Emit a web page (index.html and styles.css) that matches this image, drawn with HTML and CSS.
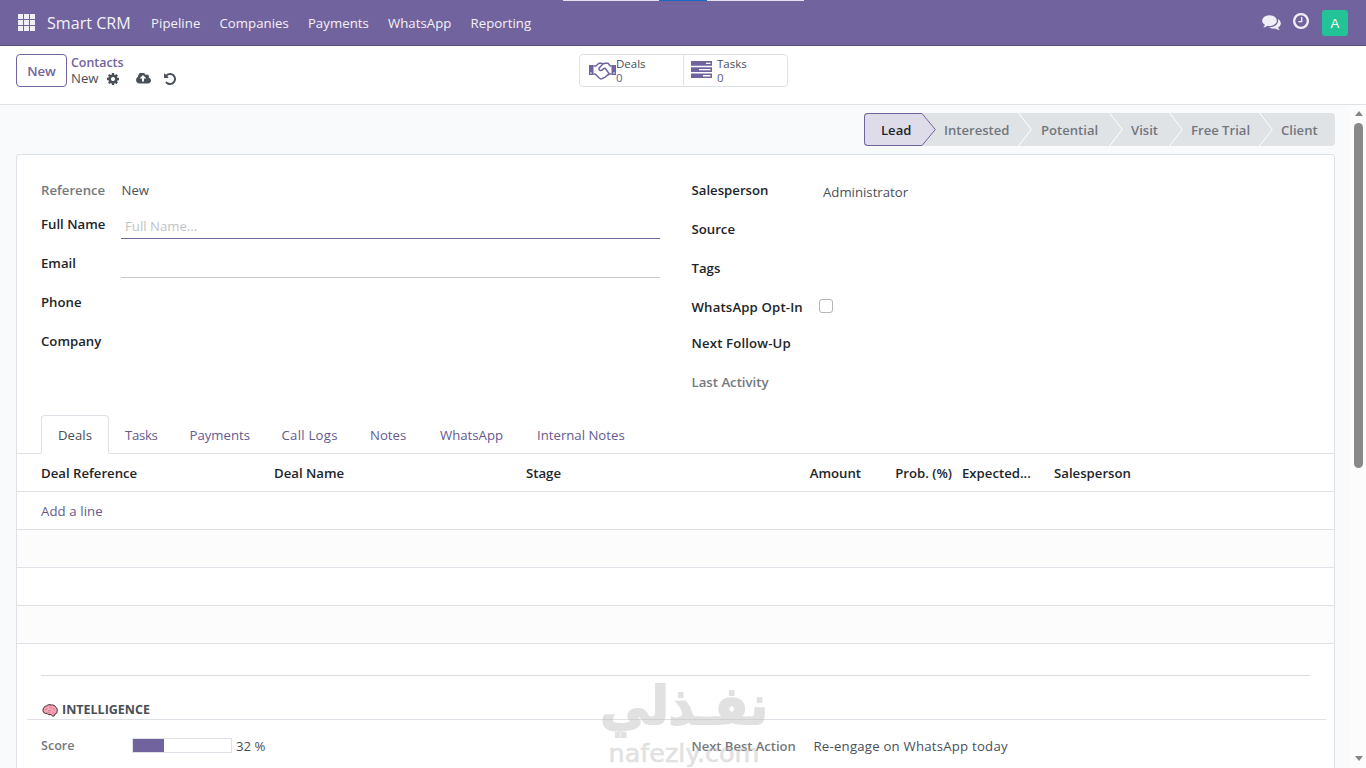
FILE: index.html
```html
<!DOCTYPE html>
<html lang="en">
<head>
    <meta charset="UTF-8">
    <meta name="viewport" content="width=device-width, initial-scale=1.0">
    <title>Smart CRM - Contacts</title>
    <link rel="stylesheet" href="styles.css">
</head>
<body>
    <header class="navbar">
        <div class="top-strip"><span></span></div>
        <svg class="apps-icon" viewBox="0 0 17 17"><path d="M0 0h5v5H0zM6 0h5v5H6zM12 0h5v5h-5zM0 6h5v5H0zM6 6h5v5H6zM12 6h5v5h-5zM0 12h5v5H0zM6 12h5v5H6zM12 12h5v5h-5z"/></svg>
        <span class="brand">Smart CRM</span>
        <nav class="menu">
            <a>Pipeline</a>
            <a>Companies</a>
            <a>Payments</a>
            <a>WhatsApp</a>
            <a>Reporting</a>
        </nav>
        <div class="systray">
            <svg class="chat-icon" viewBox="0 128 1792 1536"><path d="M1408 768q0 139-94 257t-256.500 186.500-353.500 68.500q-86 0-176-16-124 88-278 128-36 9-86 16h-3q-11 0-20.500-8t-11.500-21q-1-3-1-6.500t.5-6.500 2-6l2.500-5 3.500-5.500 4-5 4.500-5 4-4.500q5-6 23-25t26-29.500 22.500-29 25-38.500 20.500-44q-124-72-195-177t-71-224q0-139 94-257t256.500-186.500 353.500-68.500 353.500 68.500 256.500 186.500 94 257zm384 256q0 120-71 224.500t-195 176.500q10 24 20.500 44t25 38.500 22.500 29 26 29.500 23 25q1 1 4 4.500t4.500 5 4 5 3.500 5.500l2.500 5 2 6 .5 6.500-1 6.500q-3 14-13 22t-22 7q-50-7-86-16-154-40-278-128-90 16-176 16-271 0-472-132 58 4 88 4 161 0 309-45t264-129q125-92 192-212t67-254q0-77-23-152 129 71 204 178t75 230z"/></svg>
            <svg class="clock-icon" viewBox="128 128 1536 1536"><path d="M1024 544v448q0 14-9 23t-23 9h-320q-14 0-23-9t-9-23v-64q0-14 9-23t23-9h224v-352q0-14 9-23t23-9h64q14 0 23 9t9 23zm416 352q0-148-73-273t-198-198-273-73-273 73-198 198-73 273 73 273 198 198 273 73 273-73 198-198 73-273zm224 0q0 209-103 385.500t-279.500 279.500-385.500 103-385.500-103-279.500-279.500-103-385.500 103-385.500 279.500-279.500 385.500-103 385.500 103 279.500 279.500 103 385.500z"/></svg>
            <span class="avatar">A</span>
        </div>
    </header>

    <section class="control-panel">
        <div class="cp-left">
            <button class="btn-new" type="button">New</button>
            <div class="breadcrumb">
                <a>Contacts</a>
                <div class="crumb-current">
                    <span>New</span>
                    <svg class="cog-icon" viewBox="128 128 1536 1536"><path d="M1152 896q0-106-75-181t-181-75-181 75-75 181 75 181 181 75 181-75 75-181zm512-109v222q0 12-8 23t-20 13l-185 28q-19 54-39 91 35 50 107 138 10 12 10 25t-9 23q-27 37-99 108t-94 71q-12 0-26-9l-138-108q-44 23-91 38-16 136-29 186-7 28-36 28h-222q-14 0-24.500-8.500t-11.500-21.500l-28-184q-49-16-90-37l-141 107q-10 9-25 9-14 0-25-11-126-114-165-168-7-10-7-23 0-12 8-23 15-21 51-66.500t54-70.500q-27-50-41-99l-183-27q-13-2-21-12.500t-8-23.500v-222q0-12 8-23t19-13l186-28q14-46 39-92-40-57-107-138-10-12-10-24 0-10 9-23 26-36 98.500-107.500t94.500-71.500q13 0 26 10l138 107q44-23 91-38 16-136 29-186 7-28 36-28h222q14 0 24.500 8.500t11.500 21.500l28 184q49 16 90 37l142-107q9-9 24-9 13 0 25 10 129 119 165 170 7 8 7 22 0 12-8 23-15 21-51 66.500t-54 70.500q26 50 41 98l183 28q13 2 21 12.500t8 23.500z"/></svg>
                    <svg class="cloud-icon" viewBox="-64 256 1920 1280"><path d="M1216 864q0-14-9-23l-352-352q-9-9-23-9t-23 9l-351 351q-10 12-10 24 0 14 9 23t23 9h224v352q0 13 9.500 22.500t22.500 9.500h192q13 0 22.500-9.500t9.500-22.500v-352h224q13 0 22.500-9.500t9.500-22.500zm640 288q0 159-112.500 271.500t-271.500 112.500h-1088q-185 0-316.500-131.500t-131.500-316.500q0-130 70-240t188-165q-2-30-2-43 0-212 150-362t362-150q156 0 285.500 87t188.500 231q71-62 166-62 106 0 181 75t75 181q0 76-41 138 130 31 213.500 135.500t83.500 238.500z"/></svg>
                    <svg class="undo-icon" viewBox="128 128 1536 1536"><path d="M1664 896q0 156-61 298t-164 245-245 164-298 61q-172 0-327-72.500t-264-204.500q-7-10-6.500-22.500t8.500-20.500l137-138q10-9 25-9 16 2 23 12 73 95 179 147t225 52q104 0 198.500-40.500t163.500-109.500 109.500-163.500 40.500-198.500-40.500-198.500-109.500-163.500-163.500-109.500-198.500-40.500q-98 0-188 35.500t-160 101.500l137 138q31 30 14 69-17 40-59 40h-448q-26 0-45-19t-19-45v-448q0-42 40-59 39-17 69 14l130 129q107-101 244.500-156.500t284.500-55.500q156 0 298 61t245 164 164 245 61 298z"/></svg>
                </div>
            </div>
        </div>
        <div class="stat-buttons">
            <div class="stat">
                <svg class="handshake-icon" viewBox="0 0 27 18">
                    <path class="solid" d="M0 3h4.500v10H0zM22.500 3H27v10h-4.500z"/>
                    <path class="line" d="M4.500 4h2.300L10 1.200h2.500l1.300.8L16 1.200h3L21.300 4h1.200M4.500 12h1.700l4 4c1 .9 2 1.200 3 .6l1.400-.7 1.700-.8 1.500-1.300 1.500-1.600 1.300-.2h1.900M13.800 2l-3.600 4c-.7 1 0 2.200 1.200 2.500 1.300.3 2.400-.7 3.400-1.900l1.300-.3 3.600 4.700c.6.9.2 1.700-.7 2"/>
                    <circle class="dot" cx="2" cy="11" r=".8"/><circle class="dot" cx="25" cy="11" r=".8"/>
                </svg>
                <div class="stat-text"><span>Deals</span><b>0</b></div>
            </div>
            <div class="stat stat-tasks">
                <svg class="tasks-icon" viewBox="0 0 21 17">
                    <path class="solid" d="M0 0h21v4.700H0zM0 6.200h21v4.700H0zM0 12.400h21V17H0z"/>
                    <path class="slot" d="M15 1.700h4.500v1.400H15zM8 7.900h11.500v1.400H8zM12 14.100h7.500v1.300H12z"/>
                </svg>
                <div class="stat-text"><span>Tasks</span><b>0</b></div>
            </div>
        </div>
    </section>

    <div class="content">
        <main class="form-view">
            <div class="statusbar">
                <div class="stage stage-active"><span>Lead</span></div>
                <svg class="arrow-active" viewBox="0 0 14 33"><path class="tip" d="M0 .5L13.300 16.500 0 32.500"/></svg>
                <div class="stage stage-interested"><span>Interested</span><svg class="arrow" viewBox="0 0 14 33"><path d="M.5 0L13.300 16.500.5 33"/></svg></div>
                <div class="stage stage-potential"><span>Potential</span><svg class="arrow" viewBox="0 0 14 33"><path d="M.5 0L13.300 16.500.5 33"/></svg></div>
                <div class="stage stage-visit"><span>Visit</span><svg class="arrow" viewBox="0 0 14 33"><path d="M.5 0L13.300 16.500.5 33"/></svg></div>
                <div class="stage stage-trial"><span>Free Trial</span><svg class="arrow" viewBox="0 0 14 33"><path d="M.5 0L13.300 16.500.5 33"/></svg></div>
                <div class="stage stage-client"><span>Client</span></div>
            </div>

            <div class="sheet">
                <div class="groups">
                    <div class="group group-left">
                        <div class="field field-ref"><label class="readonly">Reference</label><span class="value">New</span></div>
                        <div class="field"><label>Full Name</label><div class="input input-focus">Full Name...</div></div>
                        <div class="field"><label>Email</label><div class="input"></div></div>
                        <div class="field"><label>Phone</label></div>
                        <div class="field"><label>Company</label></div>
                    </div>
                    <div class="group group-right">
                        <div class="field"><label>Salesperson</label><span class="value salesperson">Administrator</span></div>
                        <div class="field"><label>Source</label></div>
                        <div class="field"><label>Tags</label></div>
                        <div class="field field-optin"><label>WhatsApp Opt-In</label><span class="checkbox"></span></div>
                        <div class="field field-short"><label>Next Follow-Up</label></div>
                        <div class="field"><label class="readonly">Last Activity</label></div>
                    </div>
                </div>

                <div class="tabs">
                    <a class="tab tab-active">Deals</a>
                    <a class="tab tab-tight">Tasks</a>
                    <a class="tab">Payments</a>
                    <a class="tab tab-wide">Call Logs</a>
                    <a class="tab">Notes</a>
                    <a class="tab">WhatsApp</a>
                    <a class="tab">Internal Notes</a>
                </div>

                <div class="list">
                    <div class="list-row list-head">
                        <span>Deal Reference</span>
                        <span>Deal Name</span>
                        <span>Stage</span>
                        <span class="num">Amount</span>
                        <span class="num">Prob. (%)</span>
                        <span class="expected">Expected...</span>
                        <span>Salesperson</span>
                    </div>
                    <div class="list-row"><a>Add a line</a></div>
                    <div class="list-row striped"></div>
                    <div class="list-row"></div>
                    <div class="list-row striped"></div>
                </div>

                <div class="separator"></div>
                <div class="section-title">
                    <svg class="brain-icon" viewBox="0 0 16 13">
                        <path class="brain" d="M1 6.500C.8 4 2.500 2.300 4.300 2 5.500.7 7.700.3 9.200 1c2-.3 4 .7 4.600 2.200 1.300 1 1.800 2.700 1.300 4.200.1 1.500-.9 2.500-2.100 2.600l-.7 1.800-1.700.5-1.500-1.900C7.500 11 5.500 10.600 5 9.400 3 9.700 1 8.800 1 6.500z"/>
                        <path class="fold" d="M3 5.500c1 .3 2-.2 2.200-1.200M6 7c1-.8 2.500-.6 3 .3M7.500 3.200c1.200-.2 2 .5 2 1.400M11.500 4c-.3 1 .3 1.900 1.500 2M5 9.400C6 9 7 8.500 8 9M10.500 9c.8.3 1.700.2 2.300-.5"/>
                    </svg>
                    <span>INTELLIGENCE</span>
                </div>
                <div class="score-row">
                    <div class="score">
                        <span class="label-soft">Score</span>
                        <div class="progress"><div style="width: 32%"></div></div>
                        <span>32 %</span>
                    </div>
                    <div class="next-action">
                        <span class="label-soft">Next Best Action</span>
                        <span class="action-text">Re-engage on WhatsApp today</span>
                    </div>
                </div>
            </div>
        </main>
        <div class="scrollbar">
            <span class="scroll-up"></span>
            <span class="thumb"></span>
            <span class="scroll-down"></span>
        </div>
    </div>

    <div class="watermark">
        <span class="wm-arabic" lang="ar" dir="rtl">نفـذلي</span>
        <span class="wm-latin">nafezly.com</span>
    </div>
</body>
</html>
```
FILE: styles.css
```css
* {
    box-sizing: border-box;
}

body {
    margin: 0;
    height: 768px;
    overflow: hidden;
    position: relative;
    display: flex;
    flex-direction: column;
    font-family: "Open Sans", "Noto Sans", sans-serif;
    font-size: 13.2px;
    line-height: 18px;
    color: #495057;
    background: #f9fafb;
}

svg {
    display: block;
    flex: none;
}

/* Navbar */
.navbar {
    height: 46px;
    flex: none;
    display: flex;
    align-items: center;
    padding: 0 18px;
    background: #71639e;
    border-bottom: 1px solid #5a4f7f;
    color: #f4f2f8;
}

.top-strip {
    position: absolute;
    top: 0;
    left: 563px;
    width: 241px;
    height: 1px;
    background: #e4e1ee;
}

.top-strip span {
    display: block;
    width: 48px;
    height: 1px;
    margin-left: 96px;
    background: #1a66c0;
}

.apps-icon {
    width: 17px;
    height: 17px;
    fill: #f1eff6;
}

.brand {
    width: 104px;
    padding-left: 12px;
    font-size: 16.1px;
    white-space: nowrap;
}

.menu {
    display: flex;
    gap: 19px;
    padding-left: 12px;
    letter-spacing: .06px;
}

.systray {
    display: flex;
    align-items: center;
    margin-left: auto;
}

.chat-icon {
    width: 19px;
    height: 16px;
    margin-bottom: 1px;
    fill: #f1eff6;
}

.clock-icon {
    width: 16px;
    height: 16px;
    margin: 0 13px 3px 12px;
    fill: #f1eff6;
}

.avatar {
    width: 26px;
    height: 26px;
    border-radius: 3px;
    background: #22c397;
    color: #fff;
    font-family: "Liberation Sans", sans-serif;
    line-height: 27px;
    text-align: center;
}

/* Control panel */
.control-panel {
    height: 59px;
    flex: none;
    display: flex;
    align-items: flex-start;
    padding: 8px 16px;
    background: #fff;
    border-bottom: 1px solid #dee2e6;
}

.cp-left {
    width: 563px;
    display: flex;
}

.btn-new {
    width: 51px;
    height: 33px;
    padding: 0;
    border: 1px solid #71639e;
    border-radius: 4px;
    background: #fff;
    color: #71639e;
    font-family: inherit;
    font-size: 13.2px;
    font-weight: 600;
}

.breadcrumb {
    padding-left: 4px;
    line-height: 17px;
}

.breadcrumb a {
    display: block;
    height: 16px;
    color: #71639e;
    font-size: 12.4px;
    font-weight: 600;
}

.crumb-current {
    display: flex;
    align-items: center;
}

.crumb-current svg {
    fill: #495057;
}

.cog-icon {
    width: 12px;
    height: 12px;
    margin-left: 8px;
}

.cloud-icon {
    width: 15px;
    height: 11px;
    margin-left: 17px;
}

.undo-icon {
    width: 12px;
    height: 12px;
    margin-left: 13px;
}

.stat-buttons {
    display: flex;
    width: 209px;
    height: 33px;
    border: 1px solid #dee2e6;
    border-radius: 4px;
}

.stat {
    width: 103px;
    display: flex;
    align-items: center;
    padding-left: 9px;
}

.stat-tasks {
    border-left: 1px solid #dee2e6;
    padding-left: 7px;
}

.stat-text {
    display: flex;
    flex-direction: column;
    font-size: 11.5px;
    line-height: 14px;
    padding-top: 1px;
}

.stat-tasks .stat-text {
    padding-left: 5px;
}

.stat-text b {
    color: #66598f;
    font-weight: 500;
}

.handshake-icon {
    width: 27px;
    height: 18px;
}

.handshake-icon .line {
    fill: none;
    stroke: #71639e;
    stroke-width: 1.5;
    stroke-linejoin: round;
}

.solid {
    fill: #71639e;
}

.dot,
.slot {
    fill: #fff;
}

.tasks-icon {
    width: 21px;
    height: 17px;
    margin-bottom: 2px;
}

/* Form view */
.content {
    flex: 1;
    min-height: 0;
    display: flex;
}

.form-view {
    width: 1335px;
    padding: 8px 0 0 16px;
}

.statusbar {
    width: 471px;
    height: 33px;
    margin-left: auto;
    display: flex;
    background: #e0e3e6;
    border-radius: 4px;
    color: #70777e;
    font-size: 13.1px;
    font-weight: 600;
}

.stage {
    display: flex;
    align-items: center;
    justify-content: space-between;
    padding-left: 8px;
    white-space: nowrap;
}

.stage-active {
    width: 58px;
    padding-left: 16px;
    border: 1px solid #71639e;
    border-right: 0;
    border-radius: 4px 0 0 4px;
    background: #dfdce9;
    color: #212529;
}

.stage-interested {
    width: 96px;
}

.stage-potential {
    width: 91px;
    padding-left: 9px;
}

.stage-visit {
    width: 60px;
}

.stage-trial {
    width: 90px;
}

.arrow,
.arrow-active {
    width: 14px;
    height: 33px;
    fill: none;
    stroke: #fff;
}

.arrow-active .tip {
    fill: #dfdce9;
    stroke: #71639e;
}

.sheet {
    height: 640px;
    margin-top: 8px;
    padding-top: 16px;
    background: #fff;
    border: 1px solid #dee2e6;
    border-radius: 3px;
}

.groups {
    height: 244px;
    display: grid;
    grid-template-columns: 619px 619px;
    column-gap: 31.5px;
    padding-left: 24px;
}

.group-left {
    padding-top: 4px;
}

.field {
    height: 39px;
    display: flex;
    align-items: center;
}

.field-ref {
    height: 30px;
}

.field-short {
    height: 36px;
}

.field-optin {
    height: 38px;
}

.field label {
    width: 80px;
    padding-bottom: 2px;
    color: #212529;
    font-weight: 600;
    white-space: nowrap;
}

.field-ref label,
.field-optin label {
    padding-bottom: 0;
}

.group-right label {
    width: 128px;
}

.field-optin label {
    letter-spacing: .15px;
}

.field-short label {
    letter-spacing: .15px;
}

.field .readonly {
    color: #74797e;
}

.group-right .readonly {
    padding-bottom: 0;
}

.value {
    padding-left: .5px;
}

.salesperson {
    padding: 2px 0 0 3.5px;
}

.input {
    width: 539px;
    height: 27px;
    margin-top: 2px;
    padding: 5px 4px 0;
    border-bottom: 1px solid #c6c9cc;
    color: #bfc3c8;
}

.input-focus {
    border-color: #71639e;
}

.checkbox {
    width: 14px;
    height: 14px;
    margin: -2px 0 0 -1px;
    border: 1px solid #b3b5b8;
    border-radius: 3px;
}

/* Notebook */
.tabs {
    height: 39px;
    display: grid;
    grid-template-columns: 68px 64.5px 92px 88.5px 70px 97px 1fr;
    padding-left: 24px;
    border-bottom: 1px solid #dee2e6;
}

.tab {
    height: 39px;
    padding: 11px 0 0 16px;
    color: #66598f;
    white-space: nowrap;
}

.tab-tight {
    letter-spacing: -.3px;
}

.tab-wide {
    letter-spacing: .25px;
}

.tab-active {
    padding: 10px 0 0 16px;
    border: 1px solid #dee2e6;
    border-bottom-color: #fff;
    border-radius: 4px 4px 0 0;
    color: #495057;
}

.list-row {
    height: 38px;
    display: grid;
    grid-template-columns: 233px 252px 242px 93px 91px 102px 1fr;
    align-items: center;
    padding-left: 24px;
    border-bottom: 1px solid #dee2e6;
}

.list-row a {
    color: #66598f;
    letter-spacing: .1px;
}

.list-head {
    color: #212529;
    font-weight: 600;
}

.list-head .num {
    text-align: right;
}

.list-head .expected {
    padding-left: 10px;
}

.striped {
    background: #fcfcfc;
}

.separator {
    width: 1269px;
    margin: 31px 0 0 24px;
    border-top: 1px solid #dadddf;
}

.section-title {
    width: 1299px;
    height: 44px;
    margin-left: 10px;
    padding: 25px 0 0 15px;
    display: flex;
    align-items: center;
    gap: 4px;
    border-bottom: 1px solid #dee2e6;
    font-size: 12.5px;
    font-weight: 700;
}

.brain-icon {
    width: 16px;
    height: 13px;
}

.brain {
    fill: #f4a4b5;
    stroke: #3b2830;
}

.fold {
    fill: none;
    stroke: #d76b85;
    stroke-width: .8;
}

.score-row {
    display: grid;
    grid-template-columns: 650.5px 1fr;
    padding: 17px 0 0 24px;
}

.score,
.next-action {
    display: flex;
    align-items: center;
}

.label-soft {
    color: #74797e;
    font-size: 13px;
    font-weight: 600;
    white-space: nowrap;
}

.score .label-soft {
    width: 91px;
    font-size: 12.6px;
}

.progress {
    width: 100px;
    height: 15px;
    margin: -2px 4px 0 0;
    border: 1px solid #dee2e6;
}

.progress div {
    height: 13px;
    background: #71639e;
}

.next-action .label-soft {
    width: 122px;
}

.action-text {
    letter-spacing: .22px;
}

/* Scrollbar */
.scrollbar {
    width: 17px;
    margin-left: auto;
    padding: 6px 2px 7px 4px;
    display: flex;
    flex-direction: column;
    align-items: center;
    background: #fcfcfc;
}

.scroll-up,
.scroll-down {
    border: 4.5px solid transparent;
}

.scroll-up {
    border-top: 0;
    border-bottom: 5px solid #858585;
}

.thumb {
    width: 9px;
    height: 345px;
    margin-top: 7px;
    border-radius: 5px;
    background: #898989;
}

.scroll-down {
    margin-top: auto;
    border-bottom: 0;
    border-top: 5px solid #858585;
}

/* Watermark over the page */
.watermark {
    position: absolute;
    left: 600px;
    top: 676px;
    width: 168px;
    height: 92px;
    display: flex;
    flex-direction: column;
    align-items: center;
    color: #bebebe;
    opacity: .45;
    white-space: nowrap;
}

.wm-arabic {
    height: 62px;
    font-family: "DejaVu Sans", sans-serif;
    font-size: 53px;
    font-weight: 700;
    line-height: 60px;
    transform: scaleX(.93);
    -webkit-text-stroke: 2px #bebebe;
}

.wm-latin {
    font-family: "DejaVu Sans", sans-serif;
    font-size: 25.500px;
    line-height: 30px;
    -webkit-text-stroke: .6px #bebebe;
}
```
